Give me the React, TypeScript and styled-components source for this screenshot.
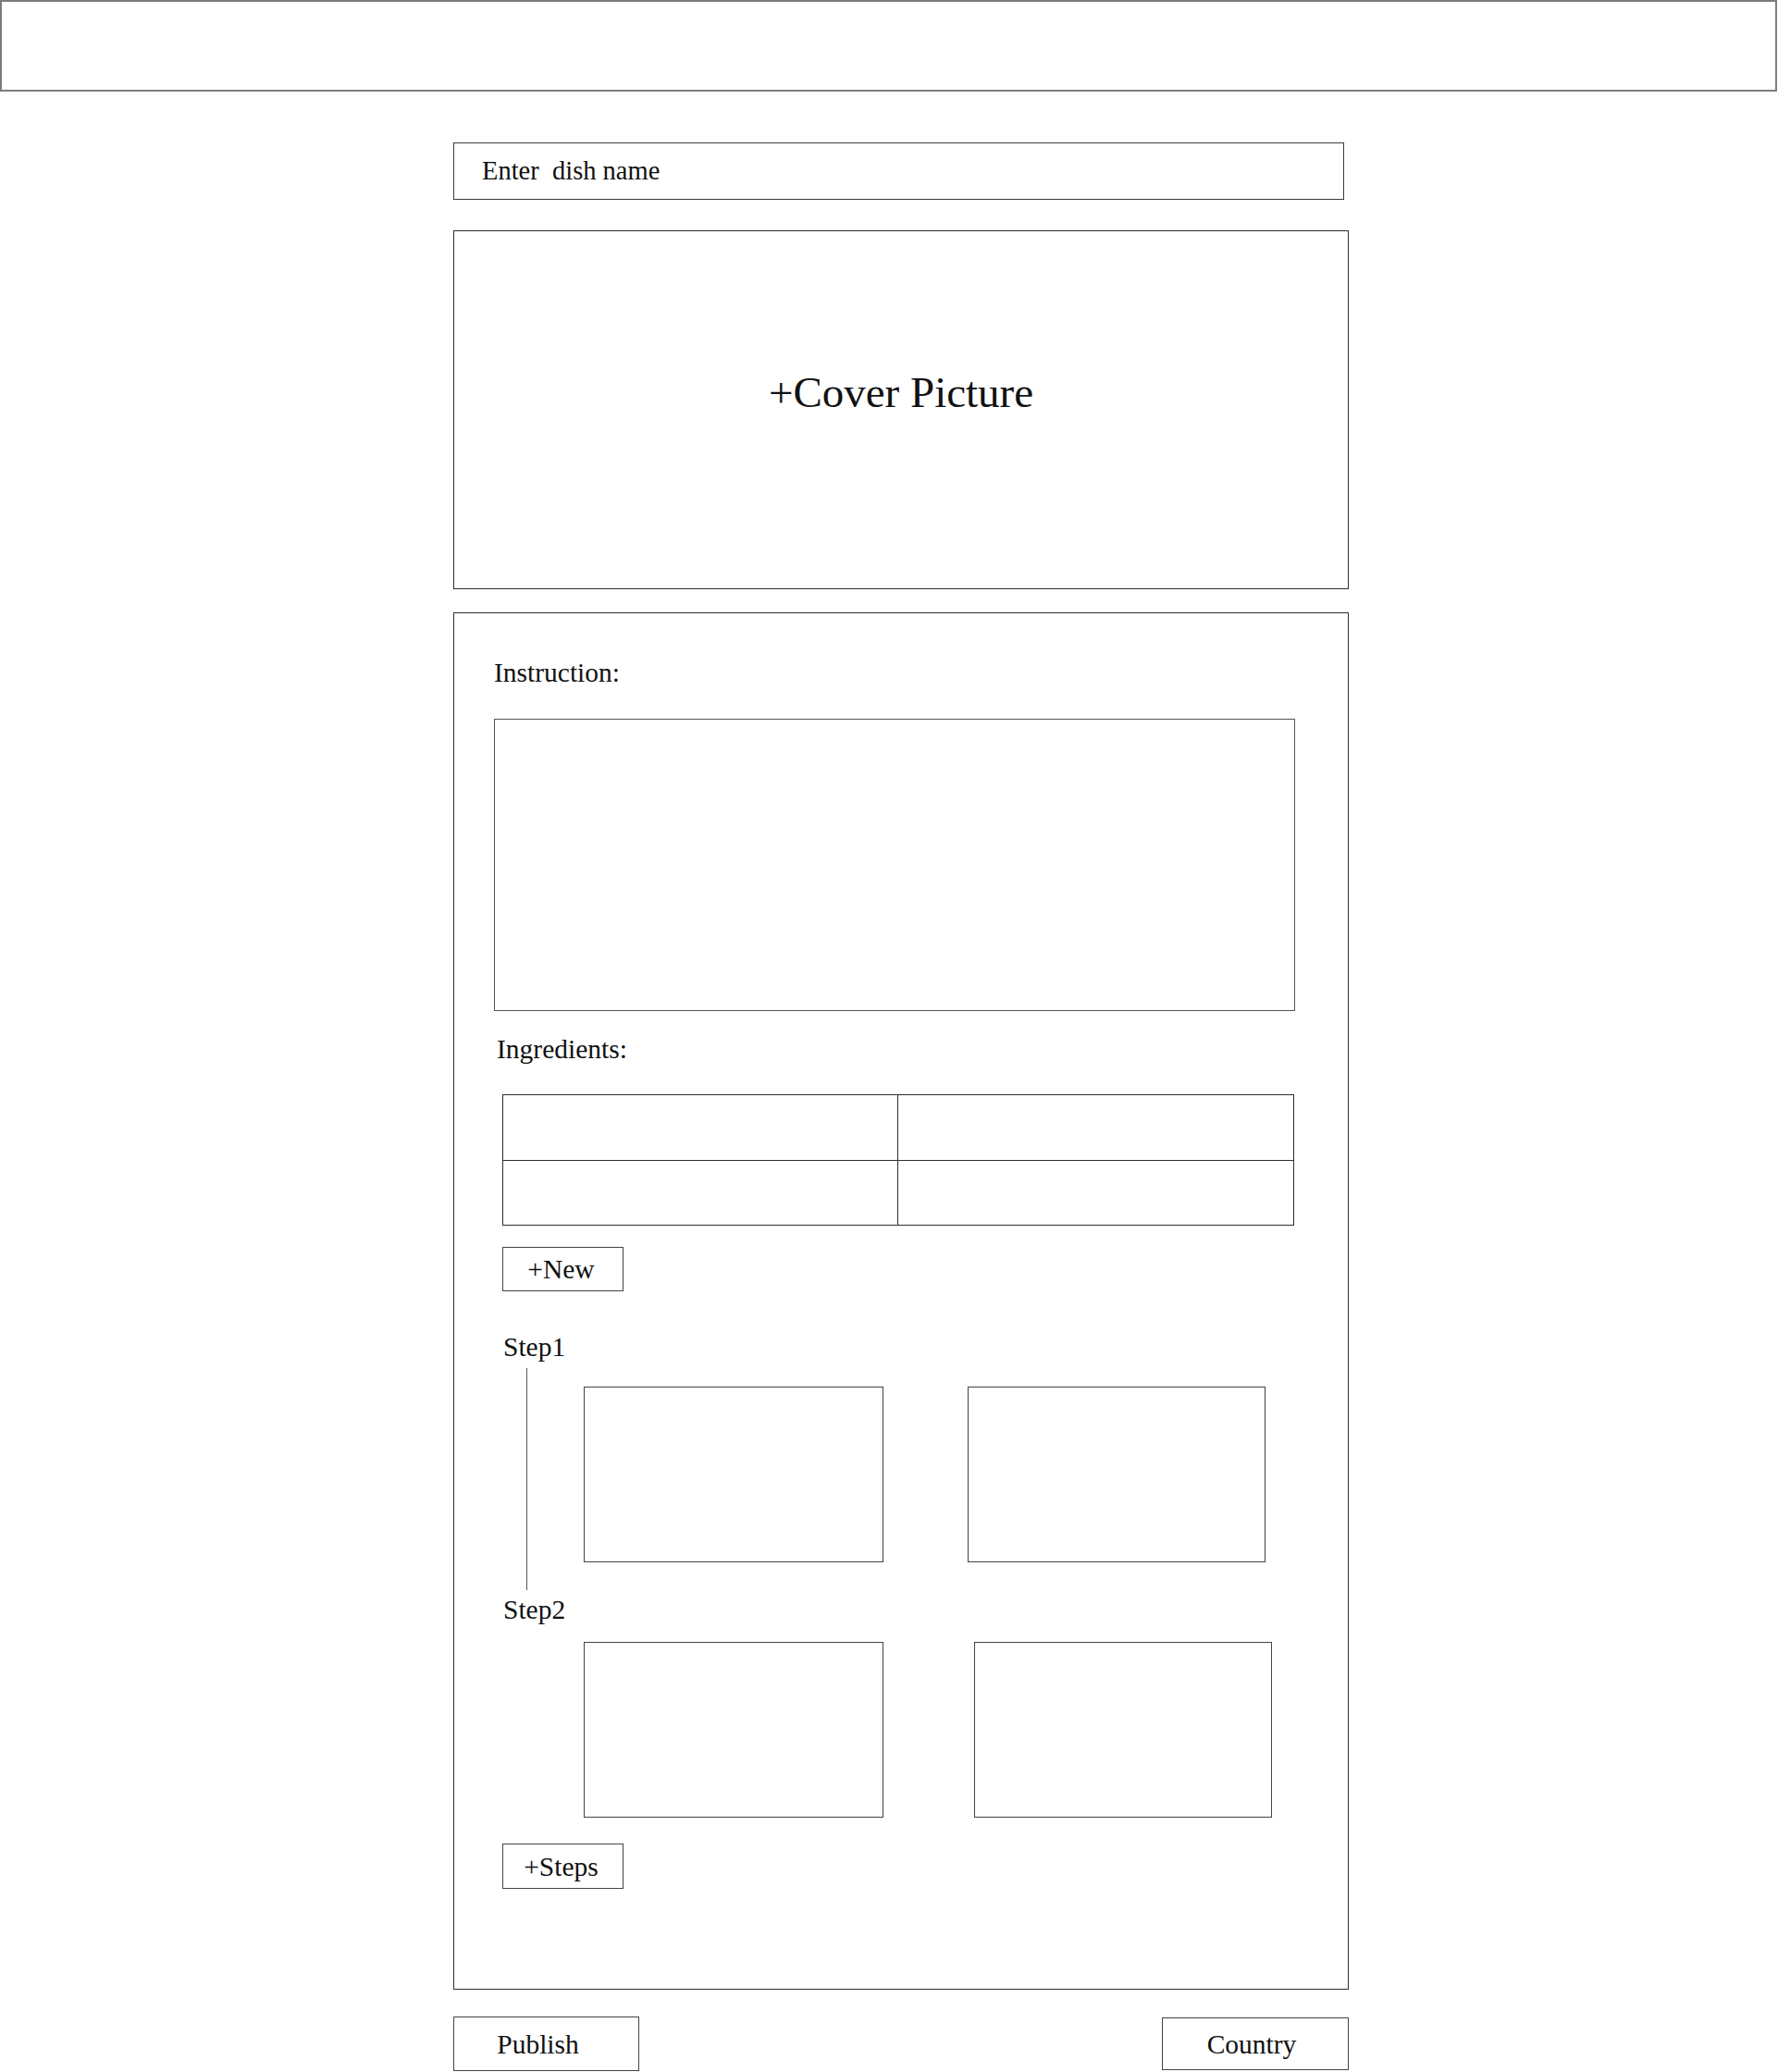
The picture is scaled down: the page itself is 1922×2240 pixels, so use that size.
import { createGlobalStyle } from 'styled-components';
import styled from 'styled-components';

// 레시피 작성 화면 와이어프레임 — 제목, 커버, 조리법·재료·단계, 하단 발행 버튼.

const GlobalStyle = createGlobalStyle`
  html, body { margin: 0; padding: 0; background: #fff; }
  body { font-family: "Liberation Serif", "DejaVu Serif", serif; color: #111; }
  * { box-sizing: border-box; }
`;

interface StepData {
  label: string;
  /** 단계 사이 세로 연결선 */
  rail: boolean;
  /** 라벨 아래 사진까지 간격 */
  picsTop: number;
  /** 두 사진 사이 간격 */
  gap: number;
  /** 다음 라벨까지 간격 */
  after: number;
}

const steps: StepData[] = [
  { label: 'Step1', rail: true, picsTop: 27, gap: 91, after: 5 },
  { label: 'Step2', rail: false, picsTop: 19, gap: 98, after: 0 },
];

export default function App() {
  return (
    <>
      <GlobalStyle />
      <Page>
        <TopBar />
        <Column>
          <NameField>Enter&nbsp;&nbsp;dish name</NameField>
          <CoverDrop>+Cover Picture</CoverDrop>

          <Editor>
            <Label>Instruction:</Label>
            <InstructionBox />

            <Label $indent={3} $top={25}>Ingredients:</Label>
            <IngredientTable>
              {[0, 1, 2, 3].map((i) => <Cell key={i} />)}
            </IngredientTable>
            <AddButton $top={23} $h={48}>+New</AddButton>

            {steps.map((s, i) => (
              <div key={s.label}>
                <Label $indent={10} $top={i === 0 ? 44 : steps[i - 1].after}>{s.label}</Label>
                <StepBody>
                  <Rail>{s.rail && <RailLine />}</Rail>
                  <Pics $top={s.picsTop} $gap={s.gap}>
                    <Pic $w={324} />
                    <Pic $w={322} />
                  </Pics>
                </StepBody>
              </div>
            ))}

            <AddButton $top={28} $h={49}>+Steps</AddButton>
          </Editor>

          <Footer>
            <ActionButton $w={201} $h={59} $shift={18}>Publish</ActionButton>
            <ActionButton $w={202} $h={57} $shift={8}>Country</ActionButton>
          </Footer>
        </Column>
      </Page>
    </>
  );
}

const Page = styled.div`
  display: flex; flex-direction: column;
  width: 1922px; min-height: 2240px;
`;
const TopBar = styled.header`
  width: 1921px; height: 99px;
  border: 2px solid #7c7c7c;
`;
const Column = styled.main`
  display: flex; flex-direction: column; align-items: flex-start;
  width: 968px; margin-left: 490px; padding-top: 55px;
`;
const NameField = styled.div`
  display: flex; align-items: center;
  width: 963px; height: 62px; padding-left: 30px;
  border: 1px solid #3a3a3a;
  font-size: 28.5px; line-height: 32px;
`;
const CoverDrop = styled.div`
  display: flex; justify-content: center;
  width: 968px; height: 388px; margin-top: 33px; padding-top: 146px;
  border: 1px solid #2e2e2e;
  font-size: 47px; line-height: 56px;
`;
const Editor = styled.section`
  display: flex; flex-direction: column; align-items: flex-start;
  width: 968px; height: 1489px; margin-top: 25px;
  padding: 48px 0 0 43px;
  border: 1px solid #2e2e2e;
`;
const Label = styled.div<{ $indent?: number; $top?: number }>`
  margin-left: ${(p) => p.$indent ?? 0}px;
  margin-top: ${(p) => p.$top ?? 0}px;
  font-size: 29.5px; line-height: 32px;
`;
const InstructionBox = styled.div`
  width: 866px; height: 316px; margin-top: 34px;
  border: 1px solid #555;
`;
const IngredientTable = styled.div`
  display: grid; grid-template-columns: 426px 1fr; grid-template-rows: 1fr 1fr;
  gap: 1px; background: #2e2e2e;
  width: 856px; height: 142px; margin: 33px 0 0 9px;
  border: 1px solid #2e2e2e;
`;
const Cell = styled.div`background: #fff;`;
const AddButton = styled.div<{ $top: number; $h: number }>`
  display: flex; align-items: center; justify-content: center;
  width: 131px; height: ${(p) => p.$h}px;
  margin: ${(p) => p.$top}px 0 0 9px;
  padding-right: 4px;
  border: 1px solid #444;
  font-size: 29.5px; line-height: 32px;
`;
const StepBody = styled.div`
  display: flex; align-items: flex-start;
  margin-left: 10px;
`;
const Rail = styled.div`
  display: flex;
  width: 87px; padding-left: 25px;
`;
const RailLine = styled.div`
  width: 0; height: 240px; margin-top: 7px;
  border-left: 1px solid #555;
`;
const Pics = styled.div<{ $top: number; $gap: number }>`
  display: flex; gap: ${(p) => p.$gap}px;
  margin-top: ${(p) => p.$top}px;
`;
const Pic = styled.div<{ $w: number }>`
  width: ${(p) => p.$w}px; height: 190px;
  border: 1px solid #444;
`;
const Footer = styled.footer`
  display: flex; justify-content: space-between; align-items: center;
  width: 968px; margin-top: 29px;
`;
const ActionButton = styled.div<{ $w: number; $h: number; $shift: number }>`
  display: flex; align-items: center; justify-content: center;
  width: ${(p) => p.$w}px; height: ${(p) => p.$h}px;
  padding-right: ${(p) => p.$shift}px;
  border: 1px solid #444;
  font-size: 29.5px; line-height: 32px;
`;
